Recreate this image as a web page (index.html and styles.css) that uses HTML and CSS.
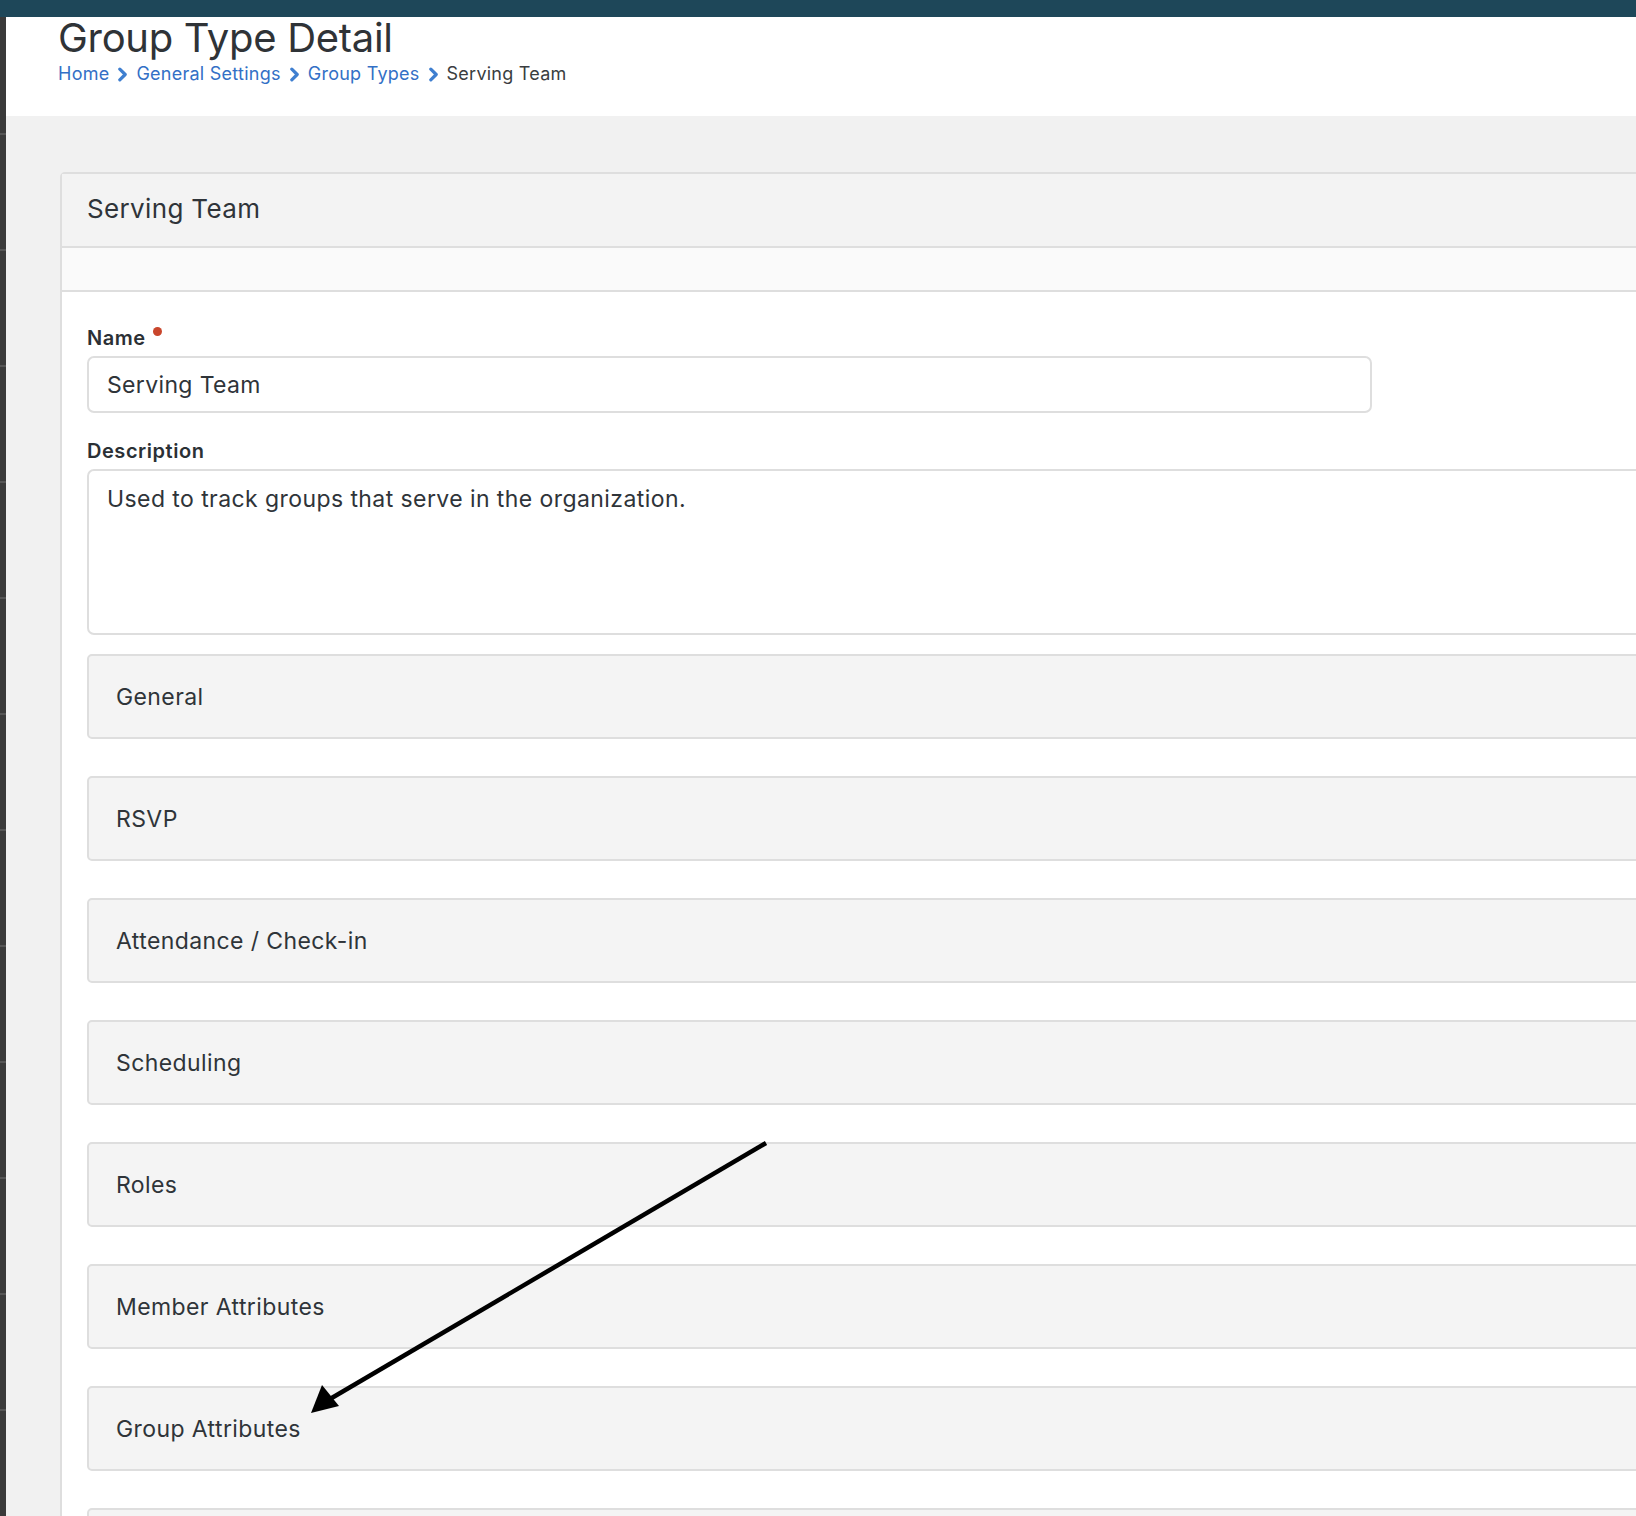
FILE: index.html
```html
<html lang="en">
<head>
<meta charset="UTF-8">
<meta name="viewport" content="width=device-width, initial-scale=1.0">
<title>Group Type Detail</title>
<link rel="stylesheet" href="styles.css">
</head>
<body>
<div class="topbar"></div>
<div class="layout">
  <aside class="rail"></aside>
  <div class="content">
    <header class="page-head">
      <h1>Group Type Detail</h1>
      <nav class="crumbs">
        <a href="#">Home</a>
        <svg class="chev" viewBox="0 0 10 14"><path d="M2.5 2 L7.5 7 L2.5 12"/></svg>
        <a href="#">General Settings</a>
        <svg class="chev" viewBox="0 0 10 14"><path d="M2.5 2 L7.5 7 L2.5 12"/></svg>
        <a href="#">Group Types</a>
        <svg class="chev" viewBox="0 0 10 14"><path d="M2.5 2 L7.5 7 L2.5 12"/></svg>
        <span>Serving Team</span>
      </nav>
    </header>
    <main class="page-body">
      <section class="panel">
        <div class="panel-head">Serving Team</div>
        <div class="panel-sub"></div>
        <div class="panel-body">
          <label class="field-label required" for="gt-name">Name</label>
          <input type="text" id="gt-name" class="text-input" value="Serving Team">
          <label class="field-label" for="gt-desc">Description</label>
          <textarea id="gt-desc" class="text-area">Used to track groups that serve in the organization.</textarea>
          <div class="sections">
            <div class="section">General</div>
            <div class="section">RSVP</div>
            <div class="section">Attendance / Check-in</div>
            <div class="section">Scheduling</div>
            <div class="section">Roles</div>
            <div class="section">Member Attributes</div>
            <div class="section">Group Attributes</div>
            <div class="section"></div>
          </div>
        </div>
      </section>
    </main>
  </div>
</div>
<svg class="annot" width="1636" height="1516" viewBox="0 0 1636 1516">
  <line x1="766" y1="1143" x2="330" y2="1399" stroke="#000" stroke-width="4.5"/>
  <polygon points="311,1413 322,1385 339,1406" fill="#000"/>
</svg>
</body>
</html>
```
FILE: styles.css
```css
:root{--bar:#1e4759;--rail:#3a3a3a;--bg:#f1f1f1;--text:#2f3439;--link:#3370c6;--line:#dedede}
*{box-sizing:border-box;margin:0;padding:0}
html,body{overflow:hidden}
body{font-family:Inter,"Noto Sans",sans-serif;color:var(--text);background:var(--bg);width:1636px;height:1516px;position:relative}
.topbar{height:17px;background:var(--bar)}
.layout{display:flex;height:1499px}
.rail{width:6px;flex:none;background:var(--rail) repeating-linear-gradient(to bottom,transparent 0,transparent 114px,#555 114px,#555 116px);background-position:0 2px}
.content{flex:1;min-width:0}
.page-head{background:#fff;height:99px;padding:0 0 0 52px}
.page-head h1{font-size:40px;font-weight:400;line-height:40px;letter-spacing:-0.3px;padding-top:1px;color:#2f3337}
.crumbs{display:flex;align-items:center;gap:8px;margin-top:5px;font-size:18px;line-height:22px;letter-spacing:0.25px}
.crumbs a{color:var(--link);text-decoration:none}
.crumbs span{color:#3a3d40}
.chev{width:11px;height:15px;fill:none;stroke:#3f7fd0;stroke-width:3;stroke-linecap:round;stroke-linejoin:round}
.page-body{padding:56px 0 0 54px}
.panel{width:1700px;background:#fff;border:2px solid var(--line);border-radius:5px 0 0 0}
.panel-head{height:74px;background:#f3f3f3;border-bottom:2px solid var(--line);padding:0 0 0 25px;font-size:26px;letter-spacing:0.35px;line-height:70px;color:var(--text)}
.panel-sub{height:44px;background:#fafafa;border-bottom:2px solid var(--line)}
.panel-body{padding:34px 0 60px 25px}
.field-label{display:block;font-size:20px;font-weight:600;letter-spacing:0.55px;line-height:24px;color:#2b3035;margin-bottom:6px}
.required::after{content:"";display:inline-block;width:9px;height:9px;border-radius:50%;background:#c9462c;margin-left:7px;vertical-align:9px}
.text-input{display:block;width:1285px;height:57px;border:2px solid var(--line);border-radius:7px;padding:0 18px;font:23px Inter,"Noto Sans",sans-serif;letter-spacing:0.35px;color:var(--text);background:#fff;margin-bottom:26px}
.text-area{display:block;width:1620px;height:166px;border:2px solid var(--line);border-radius:7px;padding:14px 18px;font:23px/28px Inter,"Noto Sans",sans-serif;letter-spacing:0.42px;color:var(--text);resize:none;background:#fff}
.sections{display:flex;flex-direction:column;gap:37px;margin-top:19px}
.section{height:85px;background:#f4f4f4;border:2px solid var(--line);border-radius:5px;padding:0 0 0 27px;font-size:23px;letter-spacing:0.4px;line-height:83px;color:var(--text)}
.annot{position:absolute;left:0;top:0;pointer-events:none}
```
